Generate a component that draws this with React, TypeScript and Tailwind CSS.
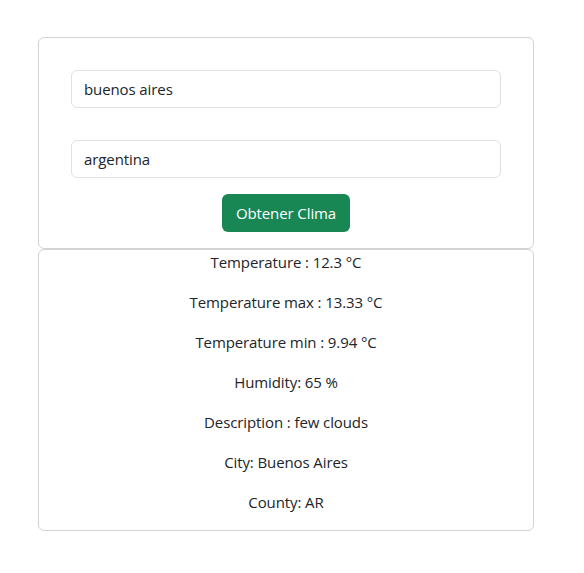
import React from "react";

export default function App() {
  const lines = [
    "Temperature : 12.3 °C",
    "Temperature max : 13.33 °C",
    "Temperature min : 9.94 °C",
    "Humidity: 65 %",
    "Description : few clouds",
    "City: Buenos Aires",
    "County: AR",
  ];
  return (
    <div
      className="w-[584px] h-[573px] bg-white text-[#212529] text-[15px] leading-[24px] tracking-[-0.1px]"
      style={{ fontFamily: '"Open Sans", "Noto Sans", sans-serif' }}
    >
      <div className="pt-[37px] pl-[38px] w-[534px]">
        <div className="border border-[#d3d3d3] rounded-[6px] px-[32px] pt-[32px] pb-[16px] flex flex-col items-center">
          <input
            className="w-full h-[38px] border border-[#dee2e6] rounded-[6px] px-[12px] text-[#212529] outline-none"
            defaultValue="buenos aires"
          />
          <input
            className="w-full h-[38px] mt-[32px] border border-[#dee2e6] rounded-[6px] px-[12px] text-[#212529] outline-none"
            defaultValue="argentina"
          />
          <button className="mt-[16px] h-[38px] w-[128px] rounded-[6px] bg-[#198754] text-white">
            Obtener Clima
          </button>
        </div>
        <div className="border border-[#d3d3d3] rounded-[6px] flex flex-col items-center">
          {lines.map((l) => (
            <p key={l} className="mb-[16px]">
              {l}
            </p>
          ))}
        </div>
      </div>
    </div>
  );
}
